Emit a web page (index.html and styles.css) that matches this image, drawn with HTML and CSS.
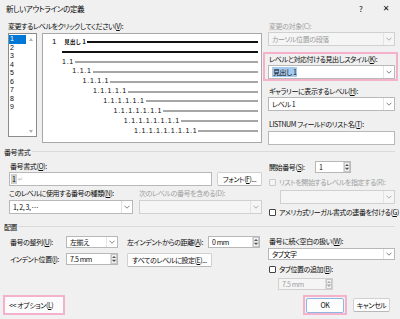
FILE: index.html
```html
<!DOCTYPE html>
<html lang="ja">
<head>
<meta charset="utf-8">
<title>新しいアウトラインの定義</title>
<link rel="stylesheet" href="styles.css">
</head>
<body>
<div class="win">
  <div class="titlebar">
    <span class="title">新しいアウトラインの定義</span>
    <span class="help">?</span>
    <span class="close">✕</span>
  </div>

  <div class="top">
    <div class="top-left">
      <div class="lbl">変更するレベルをクリックしてください(<u>V</u>):</div>
      <div class="pick">
        <div class="listbox">
          <div class="items">
            <div class="item sel">1</div>
            <div class="item">2</div>
            <div class="item">3</div>
            <div class="item">4</div>
            <div class="item">5</div>
            <div class="item">6</div>
            <div class="item">7</div>
            <div class="item">8</div>
            <div class="item">9</div>
          </div>
          <div class="lb-scroll"><span class="tri-up"></span><span class="tri-down"></span></div>
        </div>
        <div class="preview">
          <div class="pv-row i1"><span class="pv-num">1</span><span class="pv-head">見出し 1</span><span class="pv-line thick"></span></div>
          <div class="pv-row i2"><span class="pv-line thick"></span></div>
          <div class="pv-row i2"><span class="pv-num">1.1</span><span class="pv-line"></span></div>
          <div class="pv-row i3"><span class="pv-num">1.1.1</span><span class="pv-line"></span></div>
          <div class="pv-row i4"><span class="pv-num">1.1.1.1</span><span class="pv-line"></span></div>
          <div class="pv-row i5"><span class="pv-num">1.1.1.1.1</span><span class="pv-line"></span></div>
          <div class="pv-row i6"><span class="pv-num">1.1.1.1.1.1</span><span class="pv-line"></span></div>
          <div class="pv-row i7"><span class="pv-num">1.1.1.1.1.1.1</span><span class="pv-line"></span></div>
          <div class="pv-row i8"><span class="pv-num">1.1.1.1.1.1.1.1</span><span class="pv-line"></span></div>
          <div class="pv-row i9"><span class="pv-num">1.1.1.1.1.1.1.1.1</span><span class="pv-line"></span></div>
        </div>
      </div>
    </div>

    <div class="top-right">
      <div class="lbl dis">変更の対象(C):</div>
      <div class="combo dis c1"><span class="val">カーソル位置の段落</span><span class="arr"><svg width="6" height="4" viewBox="0 0 6 4"><path d="M0.5 0.7 L3 3.2 L5.5 0.7" fill="none" stroke="#9a9a9a" stroke-width="0.8"/></svg></span></div>
      <div class="hl-box">
        <div class="lbl">レベルと対応付ける見出しスタイル(<u>K</u>):</div>
        <div class="combo c2"><span class="val"><span class="selt">見出し 1</span></span><span class="arr"><svg width="6" height="4" viewBox="0 0 6 4"><path d="M0.5 0.7 L3 3.2 L5.5 0.7" fill="none" stroke="#666" stroke-width="0.8"/></svg></span></div>
      </div>
      <div class="lbl l-gal">ギャラリーに表示するレベル(<u>H</u>):</div>
      <div class="combo c3"><span class="val">レベル 1</span><span class="arr"><svg width="6" height="4" viewBox="0 0 6 4"><path d="M0.5 0.7 L3 3.2 L5.5 0.7" fill="none" stroke="#666" stroke-width="0.8"/></svg></span></div>
      <div class="lbl l-ln">LISTNUM フィールドのリスト名(<u>T</u>):</div>
      <div class="input in-ln"></div>
    </div>
  </div>

  <div class="grp g1"><span class="grp-t">番号書式</span><span class="rule"></span></div>

  <div class="sec2">
    <div class="s2-left">
      <div class="lbl s2-l1">番号書式(<u>O</u>):</div>
      <div class="s2-row">
        <div class="input in-fmt"><span class="fld">1</span><span class="ret">↵</span></div>
        <div class="btn b-font">フォント(<u>F</u>)...</div>
      </div>
      <div class="s2-labels">
        <span class="lbl w-kind">このレベルに使用する番号の種類(<u>N</u>):</span>
        <span class="lbl dis">次のレベルの番号を含める(D):</span>
      </div>
      <div class="s2-row r-combos">
        <div class="combo c-kind"><span class="val">1, 2, 3, …</span><span class="arr"><svg width="6" height="4" viewBox="0 0 6 4"><path d="M0.5 0.7 L3 3.2 L5.5 0.7" fill="none" stroke="#666" stroke-width="0.8"/></svg></span></div>
        <div class="combo dis c-next"><span class="val"></span><span class="arr"><svg width="6" height="4" viewBox="0 0 6 4"><path d="M0.5 0.7 L3 3.2 L5.5 0.7" fill="none" stroke="#9a9a9a" stroke-width="0.8"/></svg></span></div>
      </div>
    </div>
    <div class="s2-right">
      <div class="r-start">
        <span class="lbl w-start">開始番号(<u>S</u>):</span>
        <div class="spin sp-start"><span class="val">1</span><span class="sbtns"><span class="sb"><i class="tu"></i></span><span class="sb"><i class="td"></i></span></span></div>
      </div>
      <div class="chk-row r-c1"><span class="chk dis"></span><span class="lbl dis">リストを開始するレベルを指定する(R):</span></div>
      <div class="combo dis c-lvl"><span class="val"></span><span class="arr"><svg width="6" height="4" viewBox="0 0 6 4"><path d="M0.5 0.7 L3 3.2 L5.5 0.7" fill="none" stroke="#9a9a9a" stroke-width="0.8"/></svg></span></div>
      <div class="chk-row r-c2"><span class="chk"></span><span class="lbl">アメリカ式リーガル書式の連番を付ける(<u>G</u>)</span></div>
    </div>
  </div>

  <div class="grp g2"><span class="grp-t">配置</span><span class="rule"></span></div>

  <div class="sec3">
    <div class="s3-c1">
      <div class="s3-row r1">
        <span class="lbl w-c1">番号の整列(<u>U</u>):</span>
        <div class="combo c-al"><span class="val">左揃え</span><span class="arr"><svg width="6" height="4" viewBox="0 0 6 4"><path d="M0.5 0.7 L3 3.2 L5.5 0.7" fill="none" stroke="#666" stroke-width="0.8"/></svg></span></div>
      </div>
      <div class="s3-row r2">
        <span class="lbl w-c1">インデント位置(<u>I</u>):</span>
        <div class="spin sp-w"><span class="val">7.5 mm</span><span class="sbtns"><span class="sb"><i class="tu"></i></span><span class="sb"><i class="td"></i></span></span></div>
      </div>
    </div>
    <div class="s3-c2">
      <div class="s3-row r1">
        <span class="lbl w-c2">左インデントからの距離(<u>A</u>):</span>
        <div class="spin sp-w"><span class="val">0 mm</span><span class="sbtns"><span class="sb"><i class="tu"></i></span><span class="sb"><i class="td"></i></span></span></div>
      </div>
      <div class="btn b-all">すべてのレベルに設定(<u>E</u>)...</div>
    </div>
    <div class="s3-c3">
      <div class="lbl l-sp">番号に続く空白の扱い(<u>W</u>):</div>
      <div class="combo c-tab"><span class="val">タブ文字</span><span class="arr"><svg width="6" height="4" viewBox="0 0 6 4"><path d="M0.5 0.7 L3 3.2 L5.5 0.7" fill="none" stroke="#666" stroke-width="0.8"/></svg></span></div>
      <div class="chk-row r-c3"><span class="chk"></span><span class="lbl">タブ位置の追加(<u>B</u>):</span></div>
      <div class="spin dis sp-tab"><span class="val">7.5 mm</span><span class="sbtns"><span class="sb"><i class="tu"></i></span><span class="sb"><i class="td"></i></span></span></div>
    </div>
  </div>

  <div class="bottom">
    <div class="pink-box pb-opt"><div class="btn b-opt">&lt;&lt; オプション(<u>L</u>)</div></div>
    <div class="pink-box pb-ok"><div class="btn b-ok">OK</div></div>
    <div class="btn b-cancel">キャンセル</div>
  </div>
</div>
</body>
</html>
```

FILE: styles.css
```css
html, body { margin: 0; padding: 0; }
body { background: #f0f0f0; }

.win {
  width: 400px;
  height: 319px;
  overflow: hidden;
  background: #f0f0f0;
  font-family: "Noto Sans CJK JP", "Noto Sans", sans-serif;
  font-feature-settings: "palt";
  font-size: 7px;
  letter-spacing: -0.4px;
  line-height: 10px;
  color: #0c0c0c;
}

u { text-decoration: underline; text-underline-offset: 1px; }

.lbl { white-space: nowrap; height: 10px; }
.dis { color: #a0a0a0; }

/* title bar */
.titlebar {
  height: 17px;
  display: flex;
  align-items: center;
  padding-left: 6px;
}
.title { flex: 1; font-size: 7.5px; letter-spacing: -0.35px; }
.help { width: 8px; text-align: center; font-size: 8px; margin-right: 17px; letter-spacing: 0; }
.close { width: 8px; text-align: center; font-size: 8px; margin-right: 10px; font-family: "DejaVu Sans", sans-serif; letter-spacing: 0; }

/* top area */
.top {
  display: flex;
  padding-left: 8px;
  margin-top: 4px;
}
.top-left { width: 254px; }
.top-right { width: 127px; margin-left: 6px; }

.pick { display: flex; margin-top: 2px; }

.listbox {
  width: 29px;
  height: 104px;
  box-sizing: border-box;
  border: 1px solid #8c8c8c;
  background: #fff;
  display: flex;
}
.items { width: 17px; padding-top: 1px; }
.item {
  height: 8.5px;
  line-height: 8.5px;
  font-size: 7px;
  padding-left: 1px;
  letter-spacing: 0;
  font-family: "Liberation Sans", sans-serif;
  overflow: hidden;
}
.item.sel { background: #0078d7; color: #fff; }
.lb-scroll {
  flex: 1;
  display: flex;
  flex-direction: column;
  align-items: center;
  justify-content: space-between;
  padding: 4px 0 3px;
}
.tri-up { width: 0; height: 0; border-left: 2.5px solid transparent; border-right: 2.5px solid transparent; border-bottom: 3px solid #b0b0b0; }
.tri-down { width: 0; height: 0; border-left: 2.5px solid transparent; border-right: 2.5px solid transparent; border-top: 3px solid #b0b0b0; }

.preview {
  width: 220px;
  height: 110px;
  margin-left: 5px;
  box-sizing: border-box;
  border: 1px solid #a8a8a8;
  background: #fff;
  padding: 3px 3px 0 0;
}
.pv-row {
  height: 9.85px;
  display: flex;
  align-items: center;
}
.pv-num {
  font-family: "Liberation Sans", sans-serif;
  font-size: 7px;
  letter-spacing: 0.75px;
  white-space: nowrap;
  margin-right: 1px;
}
.pv-head {
  font-size: 5.5px;
  font-weight: bold;
  white-space: nowrap;
  margin-left: 3px;
  margin-right: 1px;
  letter-spacing: 0.3px;
}
.pv-line { flex: 1; height: 2px; background: #a6a6a6; margin-top: 1px; }
.pv-line.thick { background: #111; }
.i1 { padding-left: 9px; }
.i1 .pv-num { font-size: 8px; margin-right: 4px; }
.i2 { padding-left: 19px; }
.i3 { padding-left: 29.3px; }
.i4 { padding-left: 39.6px; }
.i5 { padding-left: 49.9px; }
.i6 { padding-left: 60.2px; }
.i7 { padding-left: 70.5px; }
.i8 { padding-left: 80.8px; }
.i9 { padding-left: 91.1px; }

/* controls */
.combo, .input, .spin {
  box-sizing: border-box;
  border: 1px solid #b8b8b8;
  background: #fff;
  display: flex;
  align-items: center;
  height: 14px;
}
.combo .val, .spin .val {
  flex: 1;
  padding-left: 3px;
  white-space: nowrap;
  overflow: hidden;
}
.combo .arr {
  width: 11px;
  height: 100%;
  box-sizing: border-box;
  border-left: 1px solid #e3e3e3;
  display: flex;
  align-items: center;
  justify-content: center;
}
.combo.dis, .spin.dis { background: #f5f5f5; border-color: #d0d0d0; color: #9c9c9c; }

.spin { height: 12px; }
.sbtns {
  width: 7px;
  height: 100%;
  display: flex;
  flex-direction: column;
  border-left: 1px solid #dcdcdc;
  box-sizing: border-box;
}
.sb {
  flex: 1;
  display: flex;
  align-items: center;
  justify-content: center;
  border: 1px solid #c8c8c8;
  background: #f2f2f2;
}
.sb + .sb { border-top: none; }
.tu { display: block; width: 0; height: 0; border-left: 2px solid transparent; border-right: 2px solid transparent; border-bottom: 2px solid #555; }
.td { display: block; width: 0; height: 0; border-left: 2px solid transparent; border-right: 2px solid transparent; border-top: 2px solid #555; }
.spin.dis .tu { border-bottom-color: #aaa; }
.spin.dis .td { border-top-color: #aaa; }

.btn {
  box-sizing: border-box;
  height: 14px;
  border: 1px solid #d0d0d0;
  border-bottom-color: #b8b8b8;
  border-radius: 2px;
  background: #fdfdfd;
  display: flex;
  align-items: center;
  justify-content: center;
  white-space: nowrap;
}

.chk-row { display: flex; align-items: center; height: 10px; }
.chk {
  width: 7px;
  height: 7px;
  box-sizing: border-box;
  border: 1px solid #444;
  border-radius: 1px;
  background: #fff;
  margin-right: 3px;
  flex: none;
}
.chk.dis { border-color: #c8c8c8; background: #f5f5f5; }

/* top right */
.top-right .lbl { padding-left: 1px; }
.c1 { margin-top: 1px; }
.hl-box {
  margin: 6px -3px 0 -5px;
  border: 2px solid #f5b1cc;
  padding: 0 1px 0 3px;
}
.c2 { margin-top: 1px; }
.selt { background: #a6caed; padding: 0 1px; }
.l-gal { margin-top: 5px; }
.c3 { margin-top: 1px; }
.l-ln { margin-top: 8px; }
.in-ln { margin-top: 2px; }

/* group headers */
.grp {
  display: flex;
  align-items: center;
  height: 10px;
  padding-left: 4px;
  padding-right: 5px;
}
.g1 { margin-top: 2px; }
.g2 { margin-top: 5px; }
.rule { flex: 1; height: 1px; background: #dadada; margin-left: 2px; margin-top: -1px; }

/* section 2 */
.sec2 { display: flex; padding-left: 9px; }
.s2-left { width: 253px; }
.s2-right { width: 127px; margin-left: 6px; }
.s2-l1 { margin-top: 4px; padding-left: 1px; }
.s2-row { display: flex; margin-top: 1px; }
.in-fmt { width: 203px; padding-left: 1px; }
.fld { background: #cfcfcf; padding: 0 1px; line-height: 10px; }
.ret { color: #b4b4b4; font-size: 6px; margin-left: 1px; }
.b-font { width: 45px; margin-left: 5px; }
.s2-labels { display: flex; margin-top: 2px; height: 10px; }
.w-kind { width: 130px; }
.r-combos { margin-top: 2px; }
.c-kind { width: 124px; }
.c-next { width: 123px; margin-left: 6px; }

.r-start { display: flex; align-items: center; margin-top: 4px; padding-left: 1px; }
.w-start { width: 46px; }
.sp-start { width: 36px; }
.r-c1 { margin-top: 4px; padding-left: 1px; }
.c-lvl { margin-left: 12px; margin-top: 3px; }
.r-c2 { margin-top: 3px; padding-left: 1px; }

/* section 3 */
.sec3 { display: flex; padding-left: 10px; }
.s3-row { display: flex; align-items: center; height: 12px; }
.s3-row.r1 { margin-top: 4px; }
.s3-row.r2 { margin-top: 5px; }
.s3-c1 { width: 108px; }
.w-c1 { width: 56px; }
.c-al { width: 52px; height: 12px; }
.sp-w { width: 52px; }
.s3-c2 { width: 133px; margin-left: 9px; }
.w-c2 { width: 81px; }
.b-all { width: 85px; margin-top: 5px; }
.s3-c3 { width: 127px; margin-left: 8px; }
.l-sp { margin-top: 4px; padding-left: 1px; }
.c-tab { margin-top: 2px; height: 12px; }
.r-c3 { margin-top: 4px; padding-left: 1px; }
.sp-tab { width: 55px; margin-left: 10px; margin-top: 4px; }

/* bottom */
.bottom {
  display: flex;
  align-items: center;
  margin-top: 5px;
  padding-left: 3px;
}
.pink-box {
  box-sizing: border-box;
  height: 20px;
  border: 2px solid #f5b1cc;
  display: flex;
  align-items: center;
}
.pb-opt { width: 62px; }
.b-opt { width: 100%; height: 100%; border: none; border-radius: 0; justify-content: flex-start; padding-left: 4px; background: #fbfbfb; }
.pb-ok { width: 44px; margin-left: auto; padding: 0 1px; }
.b-ok { width: 100%; height: 15px; border: 1px solid #8cb9e3; border-radius: 2px; background: #fdfdfd; }
.b-cancel { width: 37px; margin-left: 6px; margin-right: 10px; height: 14px; }
```
